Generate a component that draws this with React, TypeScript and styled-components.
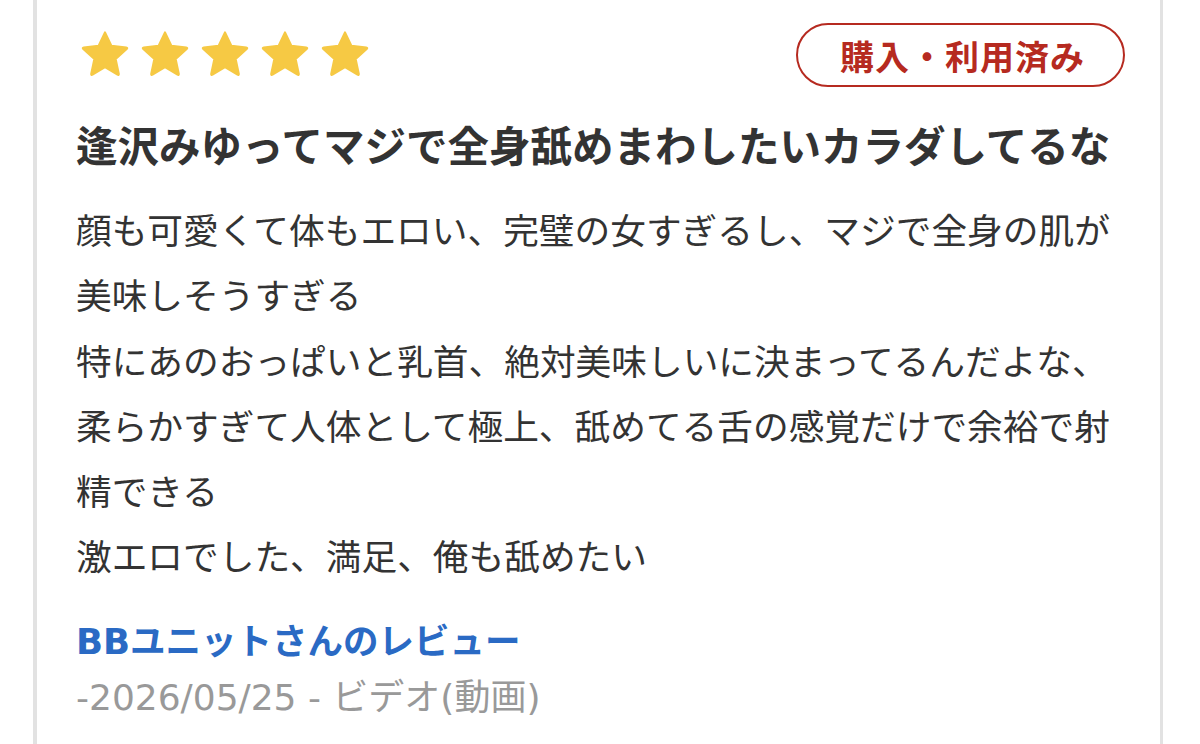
import React from 'react';
import styled, { createGlobalStyle } from 'styled-components';

const GlobalStyle = createGlobalStyle`
  html, body {
    margin: 0;
    padding: 0;
    background: #ffffff;
  }
  body {
    font-family: "Noto Sans CJK JP", sans-serif;
    color: #333333;
  }
`;

const Page = styled.div`
  width: 1200px;
  height: 744px;
  overflow: hidden;
  background: #ffffff;
`;

const Card = styled.div`
  margin-left: 33px;
  width: 1130px;
  min-height: 744px;
  box-sizing: border-box;
  border-left: 4px solid #e2e2e2;
  border-right: 3px solid #e2e2e2;
  padding: 23px 44px 0 39px;
`;

const Header = styled.div`
  display: flex;
  align-items: flex-start;
  justify-content: space-between;
  margin-right: -9px;
`;

const Stars = styled.div`
  display: flex;
  gap: 10px;
  padding-top: 6px;
  margin-left: 4px;
`;

const Badge = styled.div`
  height: 64px;
  box-sizing: border-box;
  padding: 0 38px 0 42px;
  border: 2.5px solid #b62a20;
  border-radius: 32px;
  display: flex;
  align-items: center;
  color: #b62a20;
  font-family: "Noto Sans CJK JP", sans-serif;
  font-weight: 700;
  font-size: 34px;
  letter-spacing: 1px;
`;

const Title = styled.h2`
  margin: 27px 0 0;
  font-family: "Noto Sans CJK JP", sans-serif;
  font-weight: 700;
  font-size: 41.5px;
  line-height: 60px;
  color: #333333;
  white-space: nowrap;
`;

const Body = styled.p`
  margin: 22px 0 0;
  font-family: "Noto Sans CJK JP", sans-serif;
  font-weight: 400;
  font-size: 35.7px;
  line-height: 65.3px;
  color: #333333;
`;

const Author = styled.a`
  display: block;
  margin-top: 28px;
  font-family: "DejaVu Sans", "Noto Sans CJK JP", sans-serif;
  font-weight: 700;
  font-size: 35.5px;
  line-height: 52px;
  color: #2a6ac4;
  text-decoration: none;
`;

const Meta = styled.div`
  font-family: "DejaVu Sans", "Noto Sans CJK JP", sans-serif;
  font-size: 36px;
  line-height: 60px;
  color: #999999;
`;

const Star = () => (
  <svg width="50" height="50" viewBox="0 0 24 24">
    <path
      d="M12 1.6 L15.1 8.1 L22.2 8.9 Q23 9 22.4 9.6 L17.1 14.4 L18.6 21.5 Q18.7 22.3 18 21.9 L12 18.3 L6 21.9 Q5.3 22.3 5.4 21.5 L6.9 14.4 L1.6 9.6 Q1 9 1.8 8.9 L8.9 8.1 Z"
      fill="#f6c944"
      stroke="#f6c944"
      strokeWidth="1"
      strokeLinejoin="round"
    />
  </svg>
);

const lines = [
  '顔も可愛くて体もエロい、完璧の女すぎるし、マジで全身の肌が美味しそうすぎる',
  '特にあのおっぱいと乳首、絶対美味しいに決まってるんだよな、',
  '柔らかすぎて人体として極上、舐めてる舌の感覚だけで余裕で射精できる',
  '激エロでした、満足、俺も舐めたい',
];

export default function App() {
  return (
    <Page>
      <GlobalStyle />
      <Card>
        <Header>
          <Stars>
            {[0, 1, 2, 3, 4].map((i) => (
              <Star key={i} />
            ))}
          </Stars>
          <Badge>購入・利用済み</Badge>
        </Header>
        <Title>逢沢みゆってマジで全身舐めまわしたいカラダしてるな</Title>
        <Body>
          {lines.map((line, i) => (
            <React.Fragment key={i}>
              {line}
              {i < lines.length - 1 && <br />}
            </React.Fragment>
          ))}
        </Body>
        <Author href="#">BBユニットさんのレビュー</Author>
        <Meta>-2026/05/25 - ビデオ(動画)</Meta>
      </Card>
    </Page>
  );
}
